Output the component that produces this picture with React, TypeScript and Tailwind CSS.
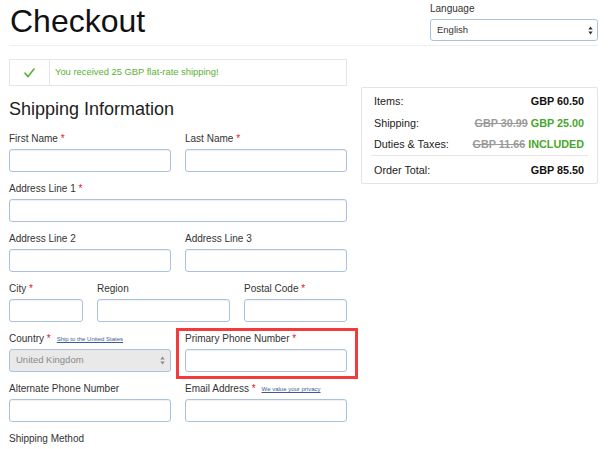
import React from "react";

const Star = () => <span className="text-[#e3151a]"> *</span>;

const Label = ({ children }: { children: React.ReactNode }) => (
  <div className="h-[14px] text-[10px] leading-[14px] text-[#333] whitespace-nowrap">{children}</div>
);

const Input = () => (
  <input
    type="text"
    readOnly
    className="mt-[3px] block h-[23px] w-full rounded-[3px] border border-[#aac2e0] bg-white shadow-[inset_0_1px_1px_rgba(0,0,0,0.06)] outline-none"
  />
);

const Field = ({ label, required }: { label: string; required?: boolean }) => (
  <div>
    <Label>
      {label}
      {required && <Star />}
    </Label>
    <Input />
  </div>
);

const Arrows = ({ color }: { color: string }) => (
  <svg width="5" height="9" viewBox="0 0 5 9" className="shrink-0">
    <path d="M2.5 0.5 L4.7 3.6 L0.3 3.6 Z" fill={color} />
    <path d="M2.5 8.5 L4.7 5.4 L0.3 5.4 Z" fill={color} />
  </svg>
);

export default function App() {
  return (
    <div className="w-[615px] h-[449px] overflow-hidden bg-white font-['Liberation_Sans',Arial,sans-serif] text-[#333]">
      <div className="ml-[9px] w-[589px]">
        {/* Header */}
        <div className="flex h-[46px] justify-between border-b border-[#eeeeee]">
          <h1 className="ml-[1px] mt-[5px] text-[32px] leading-[32px] text-[#111]">Checkout</h1>
          <div className="w-[168px] pt-[2px]">
            <div className="text-[10px] leading-[14px] text-[#333]">Language</div>
            <div className="mt-[3px] flex h-[22px] items-center justify-between rounded-[3px] border border-[#aac2e0] bg-white pl-[6px] pr-[4px] text-[9.5px] text-[#333]">
              <span>English</span>
              <Arrows color="#333" />
            </div>
          </div>
        </div>

        <div className="flex gap-[14px]">
          {/* Left column */}
          <div className="w-[338px]">
            <div className="mt-[13px] flex h-[27px] border border-[#e6e6e6]">
              <div className="flex w-[40px] items-center justify-center border-r border-[#e6e6e6]">
                <svg width="11" height="10" viewBox="0 0 11 10">
                  <path d="M1 5.2 L4 8.6 L10 1" fill="none" stroke="#5ab133" strokeWidth="1.6" strokeLinecap="round" strokeLinejoin="round" />
                </svg>
              </div>
              <div className="flex items-center pl-[5px] text-[9.4px] text-[#5ab133]">
                You received 25 GBP flat-rate shipping!
              </div>
            </div>

            <h2 className="mt-[12px] h-[22px] text-[18px] leading-[22px] text-[#222]">Shipping Information</h2>

            <div className="mt-[12px] flex flex-col gap-[10px]">
              <div className="grid grid-cols-2 gap-x-[14px]">
                <Field label="First Name" required />
                <Field label="Last Name" required />
              </div>
              <Field label="Address Line 1" required />
              <div className="grid grid-cols-2 gap-x-[14px]">
                <Field label="Address Line 2" />
                <Field label="Address Line 3" />
              </div>
              <div className="grid grid-cols-[74px_133px_1fr] gap-x-[14px]">
                <Field label="City" required />
                <Field label="Region" />
                <Field label="Postal Code" required />
              </div>
              <div className="grid grid-cols-2 gap-x-[14px]">
                <div>
                  <Label>
                    Country
                    <Star />
                    <span className="ml-[6px] align-[1px] text-[6px] text-[#3b5b9a] underline">Ship to the United States</span>
                  </Label>
                  <div className="mt-[3px] flex h-[23px] items-center justify-between rounded-[3px] border border-[#aac2e0] bg-[#e9e9e9] pl-[6px] pr-[5px] text-[9.5px] text-[#8a8a8a]">
                    <span>United Kingdom</span>
                    <Arrows color="#8a8a8a" />
                  </div>
                </div>
                <div className="relative">
                  <Field label="Primary Phone Number" required />
                  <div className="pointer-events-none absolute -left-[9px] -right-[11px] -top-[4px] -bottom-[7px] border-[3px] border-[#f23b3b]" />
                </div>
              </div>
              <div className="grid grid-cols-2 gap-x-[14px]">
                <Field label="Alternate Phone Number" />
                <div>
                  <Label>
                    Email Address
                    <Star />
                    <span className="ml-[6px] align-[1px] text-[6px] text-[#3b5b9a] underline">We value your privacy</span>
                  </Label>
                  <Input />
                </div>
              </div>
              <Label>Shipping Method</Label>
            </div>
          </div>

          {/* Right column */}
          <div className="w-[237px]">
            <div className="mt-[41px] rounded-[2px] border border-[#e3e3e3] px-[9px] pt-[2px] pb-[2px] text-[10.8px] text-[#222]">
              <div className="flex h-[22px] items-center justify-between pl-[3px] pr-[4px]">
                <span>Items:</span>
                <span className="font-bold text-[#111]">GBP 60.50</span>
              </div>
              <div className="flex h-[22px] items-center justify-between pl-[3px] pr-[4px]">
                <span>Shipping:</span>
                <span className="font-bold">
                  <span className="text-[#9a9a9a] line-through">GBP 30.99</span>{" "}
                  <span className="text-[#47a72b]">GBP 25.00</span>
                </span>
              </div>
              <div className="flex h-[21px] items-center justify-between pl-[3px] pr-[4px]">
                <span>Duties &amp; Taxes:</span>
                <span className="font-bold">
                  <span className="text-[#9a9a9a] line-through">GBP 11.66</span>{" "}
                  <span className="text-[#47a72b]">INCLUDED</span>
                </span>
              </div>
              <div className="border-t border-[#e6e6e6]" />
              <div className="mt-[3px] flex h-[22px] items-center justify-between pl-[3px] pr-[4px]">
                <span>Order Total:</span>
                <span className="font-bold text-[#111]">GBP 85.50</span>
              </div>
            </div>
          </div>
        </div>
      </div>
    </div>
  );
}
